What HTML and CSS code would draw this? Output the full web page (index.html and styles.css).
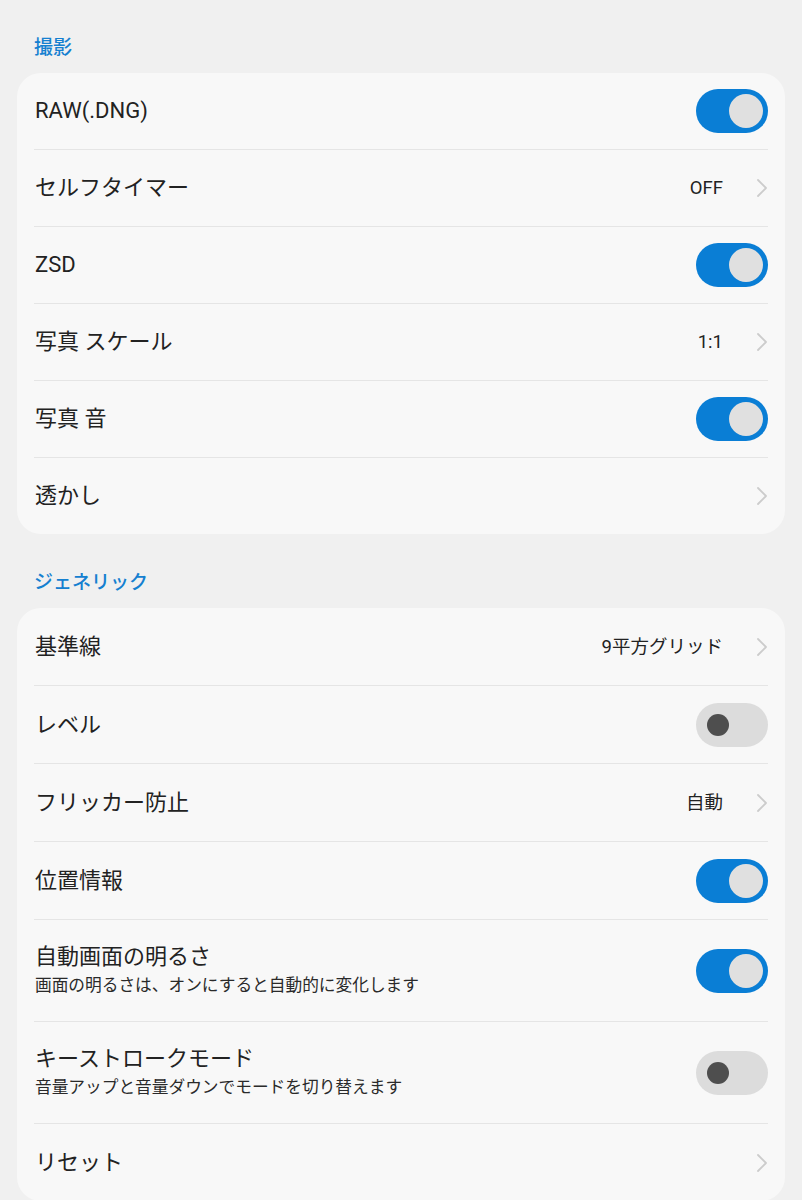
FILE: index.html
```html
<!DOCTYPE html>
<html lang="ja">
<head>
<meta charset="utf-8">
<link rel="stylesheet" href="styles.css">
</head>
<body>
<div class="page">
  <h2 class="section-title first">撮影</h2>
  <div class="card">
    <div class="row"><div class="label"><div class="title">RAW(.DNG)</div></div><span class="toggle on"><span class="knob"></span></span></div>
    <div class="row"><div class="label"><div class="title">セルフタイマー</div></div><span class="value">OFF</span><svg class="chev" viewBox="0 0 12 20"><path d="M2 2 L10 10 L2 18"/></svg></div>
    <div class="row"><div class="label"><div class="title">ZSD</div></div><span class="toggle on"><span class="knob"></span></span></div>
    <div class="row"><div class="label"><div class="title">写真 スケール</div></div><span class="value">1:1</span><svg class="chev" viewBox="0 0 12 20"><path d="M2 2 L10 10 L2 18"/></svg></div>
    <div class="row"><div class="label"><div class="title">写真 音</div></div><span class="toggle on"><span class="knob"></span></span></div>
    <div class="row"><div class="label"><div class="title">透かし</div></div><svg class="chev" viewBox="0 0 12 20"><path d="M2 2 L10 10 L2 18"/></svg></div>
  </div>

  <h2 class="section-title">ジェネリック</h2>
  <div class="card general">
    <div class="row"><div class="label"><div class="title">基準線</div></div><span class="value">9平方グリッド</span><svg class="chev" viewBox="0 0 12 20"><path d="M2 2 L10 10 L2 18"/></svg></div>
    <div class="row"><div class="label"><div class="title">レベル</div></div><span class="toggle off"><span class="knob"></span></span></div>
    <div class="row"><div class="label"><div class="title">フリッカー防止</div></div><span class="value">自動</span><svg class="chev" viewBox="0 0 12 20"><path d="M2 2 L10 10 L2 18"/></svg></div>
    <div class="row"><div class="label"><div class="title">位置情報</div></div><span class="toggle on"><span class="knob"></span></span></div>
    <div class="row tall"><div class="label"><div class="title">自動画面の明るさ</div><div class="sub">画面の明るさは、オンにすると自動的に変化します</div></div><span class="toggle on"><span class="knob"></span></span></div>
    <div class="row tall"><div class="label"><div class="title">キーストロークモード</div><div class="sub">音量アップと音量ダウンでモードを切り替えます</div></div><span class="toggle off"><span class="knob"></span></span></div>
    <div class="row"><div class="label"><div class="title">リセット</div></div><svg class="chev" viewBox="0 0 12 20"><path d="M2 2 L10 10 L2 18"/></svg></div>
  </div>
</div>
</body>
</html>
```

FILE: styles.css
```css
html, body {
  margin: 0;
  padding: 0;
  background: #f0f0f0;
}

body {
  font-family: Roboto, "Noto Sans CJK JP", sans-serif;
  color: #222222;
}

.page {
  padding: 0 17px;
}

.section-title {
  margin: 0;
  padding: 35px 17px 11px;
  font-size: 19px;
  line-height: 28px;
  font-weight: 500;
  color: #1580d0;
}

.section-title.first {
  padding-top: 34px;
}

.card {
  background: #f8f8f8;
  border-radius: 24px;
  padding: 0 17px;
}

.row {
  display: flex;
  align-items: center;
  height: 76px;
  border-top: 1px solid #e5e5e5;
}

.row:first-child {
  border-top: none;
}

.card.general .row {
  height: 77px;
}

.card.general .row.tall {
  height: 101px;
}

.label {
  flex: 1;
  min-width: 0;
  padding-left: 1px;
}

.title {
  font-size: 22px;
  line-height: 30px;
  color: #222222;
}

.sub {
  font-size: 16.7px;
  line-height: 28px;
  color: #2a2a2a;
}

.value {
  font-size: 18.5px;
  line-height: 26px;
  color: #222222;
  margin-right: 33px;
}

.chev {
  width: 12px;
  height: 20px;
  flex: none;
}

.chev path {
  fill: none;
  stroke: #cccccc;
  stroke-width: 1.8;
  stroke-linecap: round;
  stroke-linejoin: round;
}

.toggle {
  flex: none;
  width: 72px;
  height: 44px;
  border-radius: 22px;
  display: flex;
  align-items: center;
  box-sizing: border-box;
}

.toggle.on {
  background: #0a7ed5;
  justify-content: flex-end;
  padding-right: 5px;
}

.toggle.on .knob {
  width: 34px;
  height: 34px;
  border-radius: 50%;
  background: #e0e0e0;
}

.toggle.off {
  background: #dcdcdc;
  justify-content: flex-start;
  padding-left: 11px;
}

.toggle.off .knob {
  width: 22px;
  height: 22px;
  border-radius: 50%;
  background: #4e4e4e;
}
```
